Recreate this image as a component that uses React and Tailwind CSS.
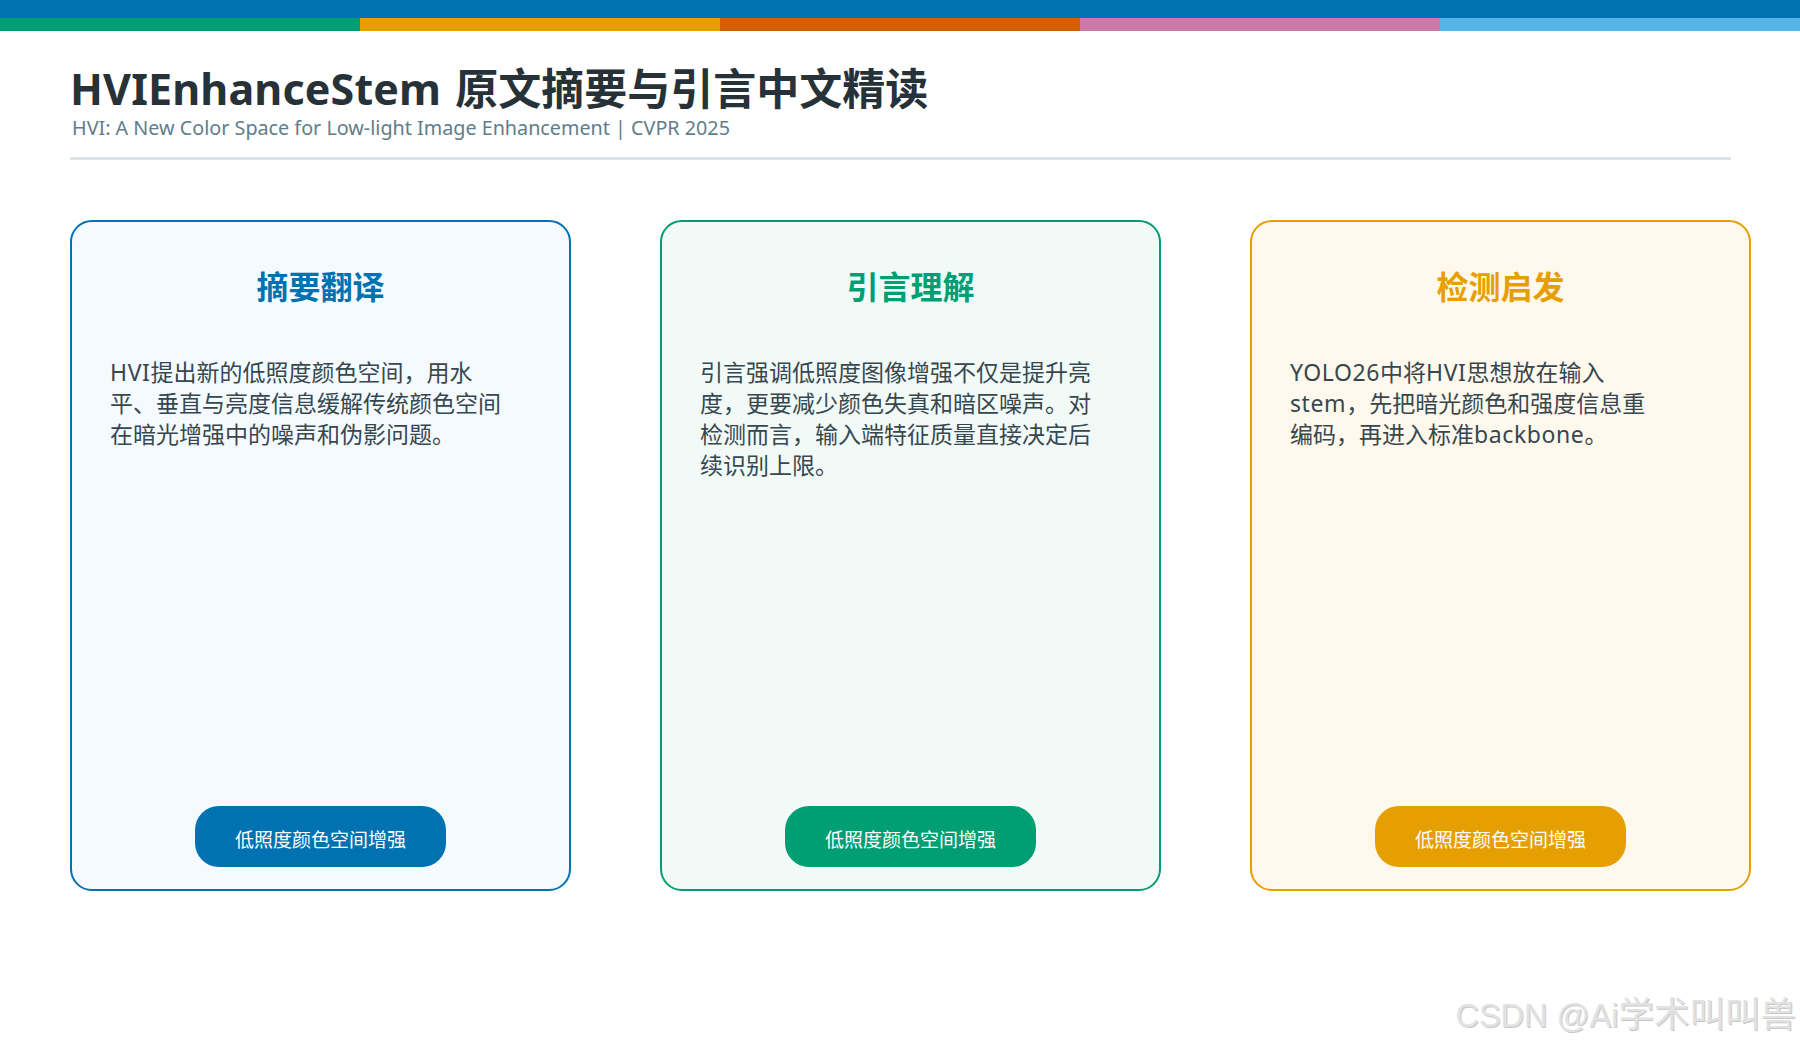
const font = { fontFamily: '"Noto Sans", "Noto Sans CJK SC", sans-serif' };

const segs = ["bg-[#009E73]", "bg-[#E69F00]", "bg-[#D55E00]", "bg-[#CC79A7]", "bg-[#56B4E9]"];

const L = ({ children }) => <span className="tracking-[0.6px]">{children}</span>;

const cards = [
  {
    title: "摘要翻译",
    body: [<p key="a"><L>HVI</L>提出新的低照度颜色空间，用水平、垂直与亮度信息缓解传统颜色空间在暗光增强中的噪声和伪影问题。</p>],
    wrap: "border-[#0072B2] bg-[#F5FAFE]",
    head: "text-[#0072B2]",
    pill: "bg-[#0072B2]",
  },
  {
    title: "引言理解",
    body: [<p key="a">引言强调低照度图像增强不仅是提升亮度，更要减少颜色失真和暗区噪声。对检测而言，输入端特征质量直接决定后续识别上限。</p>],
    wrap: "border-[#009E73] bg-[#F2FAF7]",
    head: "text-[#009E73]",
    pill: "bg-[#009E73]",
  },
  {
    title: "检测启发",
    body: [
      <p key="a"><L>YOLO26</L>中将<L>HVI</L>思想放在输入</p>,
      <p key="b"><L>stem</L>，先把暗光颜色和强度信息重</p>,
      <p key="c">编码，再进入标准<L>backbone</L>。</p>,
    ],
    wrap: "border-[#E69F00] bg-[#FFF8EC]",
    head: "text-[#E69F00]",
    pill: "bg-[#E69F00]",
  },
];

export default function App() {
  return (
    <div className="relative w-[1800px] h-[1050px] bg-white overflow-hidden" style={font}>
      <div className="h-[18px] bg-[#0072B2]" />
      <div className="flex h-[13px]">
        {segs.map((s) => (
          <div key={s} className={`flex-1 ${s}`} />
        ))}
      </div>
      <div className="mx-[70px] w-[1661px] h-[129px] border-b-[3px] border-[#DDE3EC] pt-[28px]">
        <h1 className="text-[43px] leading-[60px] font-bold text-[#263238]">
          <span className="tracking-[0.15px]">HVIEnhanceStem</span>
          <span className="ml-[3px]"> 原文摘要与引言中文精读</span>
        </h1>
        <p className="text-[19.75px] leading-[24px] text-[#607D8B] ml-[2px] -mt-[3px]">HVI: A New Color Space for Low-light Image Enhancement | CVPR 2025</p>
      </div>
      <div className="flex gap-[89px] ml-[70px] mt-[60px]">
        {cards.map((c) => (
          <div key={c.title} className={`w-[501px] h-[671px] border-2 rounded-[22px] flex flex-col items-center px-[38px] pt-[42px] pb-[22px] ${c.wrap}`}>
            <h2 className={`text-[32px] leading-[46px] font-bold text-center ${c.head}`}>{c.title}</h2>
            <div className="mt-[47px] w-full pr-[20px] text-[23px] leading-[31px] text-[#37474F]">{c.body}</div>
            <div className={`mt-auto h-[61px] w-[251px] rounded-[24px] text-white text-[19px] pt-[20px] leading-[28px] text-center ${c.pill}`}>低照度颜色空间增强</div>
          </div>
        ))}
      </div>
      <div className="absolute right-[4px] bottom-[14px] text-[35.5px] leading-[40px] text-[#e2e2e2] [text-shadow:1px_1px_0_#c8c8c8]" style={{ fontFamily: '"Liberation Sans", "Noto Sans CJK SC", sans-serif' }}><span className="text-[32.5px]">CSDN @Ai</span>学术叫叫兽</div>
    </div>
  );
}
